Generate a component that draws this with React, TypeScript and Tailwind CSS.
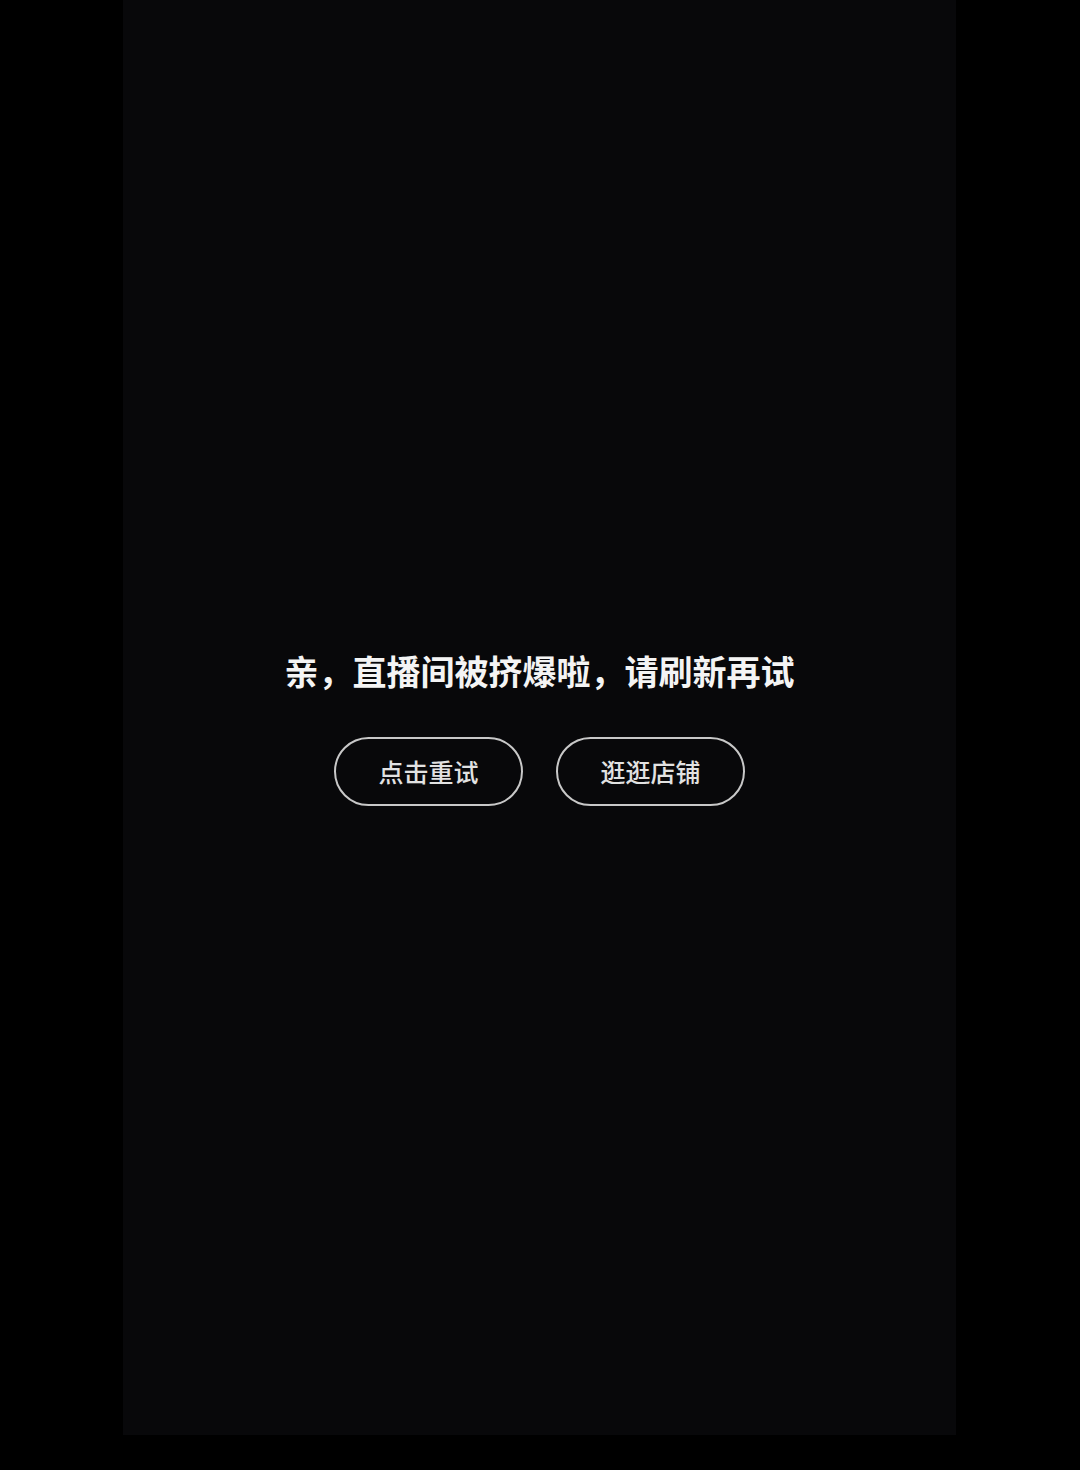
export default function App() {
  return (
    <div className="w-[1080px] h-[1470px] bg-black flex" style={{ fontFamily: '"Noto Sans CJK SC", "Noto Sans", sans-serif' }}>
      <div className="ml-[123px] w-[833px] h-[1435px] bg-[#08080a] flex flex-col items-center pt-[651px]">
        <p className="text-[34px] leading-[40px] font-bold text-[#f4f4f4]">
          亲，直播间被挤爆啦，请刷新再试
        </p>
        <div className="mt-[46px] flex gap-[33px]">
          <button className="w-[189px] h-[69px] rounded-full border-2 border-[#c8c8c8] text-[25px] font-medium text-[#e2e2e2] flex items-center justify-center">
            点击重试
          </button>
          <button className="w-[189px] h-[69px] rounded-full border-2 border-[#c8c8c8] text-[25px] font-medium text-[#e2e2e2] flex items-center justify-center">
            逛逛店铺
          </button>
        </div>
      </div>
    </div>
  );
}
